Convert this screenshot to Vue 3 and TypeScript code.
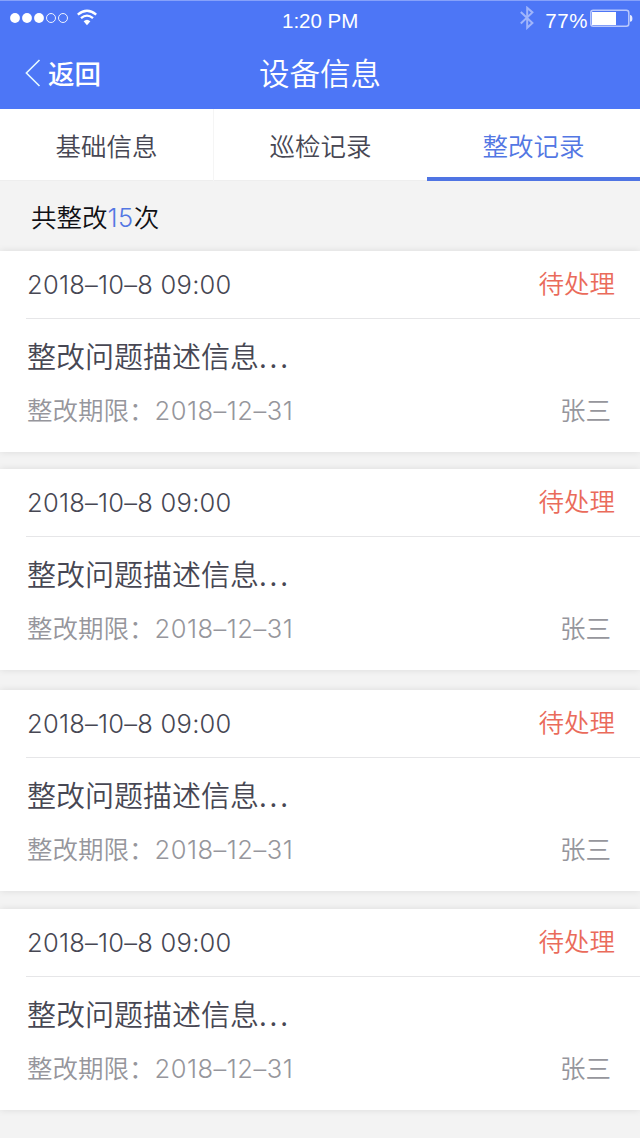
<script setup lang="ts">
interface RectifyRecord {
  id: number
  time: string
  status: string
  description: string
  deadline: string
  person: string
}

const tabs: string[] = ['基础信息', '巡检记录', '整改记录']
const activeTab = 2
const total = 15

const records: RectifyRecord[] = [1, 2, 3, 4].map((id) => ({
  id,
  time: '2018–10–8 09:00',
  status: '待处理',
  description: '整改问题描述信息',
  deadline: '2018–12–31',
  person: '张三',
}))
</script>

<template>
  <div class="screen">
    <header class="header">
      <div class="statusbar">
        <svg class="signal" width="90" height="24" viewBox="0 0 90 24">
          <g fill="#fff">
            <circle cx="15" cy="18" r="4.9" />
            <circle cx="27" cy="18" r="4.9" />
            <circle cx="39" cy="18" r="4.9" />
          </g>
          <g fill="none" stroke="#fff" stroke-width="0.9">
            <circle cx="51" cy="18" r="4.5" />
            <circle cx="63" cy="18" r="4.5" />
          </g>
        </svg>
        <svg class="wifi" width="20" height="17" viewBox="0 0 20 17">
          <g fill="none" stroke="#fff" stroke-width="2.3">
            <path d="M0.8 5.6 Q10 -2.2 19.2 5.6" />
            <path d="M4 9.2 Q10 4 16 9.2" />
          </g>
          <path d="M6.6 12.3 Q10 9.3 13.4 12.3 L10 16.2 Z" fill="#fff" />
        </svg>
        <span class="clock">1:20 PM</span>
        <div class="power">
          <svg width="14" height="24" viewBox="0 0 14 24">
            <path d="M0.8 6 L12.4 17 L7.2 21.8 V1.8 L12.4 6.4 L0.8 17.4" fill="none" stroke="#a0b5fb" stroke-width="2" />
          </svg>
          <span class="percent">77%</span>
          <svg class="battery" width="43" height="20" viewBox="0 0 43 20">
            <rect x="0.8" y="1.3" width="38" height="16" rx="2.5" fill="none" stroke="#b9c8fc" stroke-width="1.5" />
            <rect x="2" y="3" width="24" height="13" fill="#fff" />
            <path d="M40 6 Q42.4 6.3 42.4 9.4 Q42.4 12.5 40 12.8 Z" fill="#e4eaff" />
          </svg>
        </div>
      </div>
      <div class="navbar">
        <div class="back">
          <svg width="16" height="28" viewBox="0 0 16 28">
            <path d="M14.5 1 L1.4 14 L14.5 27" fill="none" stroke="#e6faff" stroke-width="1.6" />
          </svg>
          <span>返回</span>
        </div>
        <h1 class="title">设备信息</h1>
        <div></div>
      </div>
    </header>

    <nav class="tabs">
      <div v-for="(tab, i) in tabs" :key="tab" class="tab" :class="{ active: i === activeTab }">{{ tab }}</div>
    </nav>

    <div class="summary">共整改<span class="num">{{ total }}</span>次</div>

    <main class="list">
      <article v-for="r in records" :key="r.id" class="card">
        <div class="card-head">
          <span class="time">{{ r.time }}</span>
          <span class="state">{{ r.status }}</span>
        </div>
        <div class="desc">{{ r.description }}<span class="dots">...</span></div>
        <div class="foot">
          <span>整改期限：<span class="date">{{ r.deadline }}</span></span>
          <span class="person">{{ r.person }}</span>
        </div>
      </article>
    </main>
  </div>
</template>

<style>
body {
  background: #f3f3f3;
}
</style>

<style scoped>
.screen {
  width: 640px;
  height: 1138px;
  overflow: hidden;
  background: #f3f3f3;
  font-family: "Noto Sans CJK SC", sans-serif;
  font-weight: 350;
  color: #474753;
  white-space: nowrap;
}
svg {
  display: block;
  flex: none;
}
.header {
  height: 109px;
  box-sizing: border-box;
  border-top: 1px solid #86a1fa;
  background: #4d76f6;
  color: #fff;
}
.statusbar {
  display: grid;
  grid-template-columns: 77px 205px 1fr auto;
  height: 38px;
  font: 400 20px/38px "Liberation Sans", sans-serif;
}
.signal {
  margin-top: -1px;
  width: 90px;
}
.wifi {
  margin-top: 8px;
}
.clock {
  padding-top: 1px;
  font-size: 20.5px;
}
.power {
  display: flex;
  padding-right: 7px;
}
.power > svg:first-child {
  margin: 5px 11px 0 0;
}
.percent {
  padding-top: 1px;
  font-size: 20.5px;
  letter-spacing: 0.6px;
  margin-right: 2px;
}
.battery {
  margin-top: 8px;
}
.navbar {
  display: grid;
  grid-template-columns: 1fr auto 1fr;
  height: 70px;
  line-height: 67px;
}
.back {
  display: flex;
  align-items: center;
  gap: 7px;
  padding: 0 0 3px 25px;
  font-size: 26.5px;
  font-weight: 500;
}
.title {
  margin: 0;
  font-size: 30.5px;
  font-weight: 350;
}
.tabs {
  display: grid;
  grid-template-columns: 214px 213px 213px;
  height: 72px;
  box-sizing: border-box;
  background: linear-gradient(#fff 71px, #eee 71px);
}
.tab {
  height: 72px;
  box-sizing: border-box;
  text-align: center;
  font-size: 25.5px;
  line-height: 72px;
}
.tab:first-child {
  border-right: 1px solid #f5f5f5;
}
.tab.active {
  color: #5377e3;
  border-bottom: 4px solid #4f74e3;
}
.summary {
  height: 70px;
  padding-left: 31px;
  line-height: 69px;
  font-size: 25.5px;
  color: #101014;
}
.num {
  font-family: Inter, sans-serif;
  font-size: 25.5px;
  letter-spacing: 0.5px;
  color: #5377e3;
}
.card {
  height: 201px;
  margin-bottom: 18px;
  background: #fff;
  box-shadow: 0 0 7px rgba(0, 0, 0, 0.1);
}
.card:nth-child(1) {
  margin-bottom: 17px;
}
.card:nth-child(2) {
  margin-bottom: 20px;
}
.card-head {
  display: flex;
  justify-content: space-between;
  height: 68px;
  box-sizing: border-box;
  margin-left: 26px;
  padding: 0 25px 0 1px;
  border-bottom: 1px solid #e6e6e8;
  line-height: 67px;
}
.time {
  font-family: Inter, sans-serif;
  font-size: 25.5px;
  letter-spacing: 0.25px;
}
.state {
  font-size: 25.5px;
  line-height: 62px;
  color: #ea6b5b;
}
.desc {
  height: 66px;
  padding: 3px 0 0 27px;
  box-sizing: border-box;
  font-size: 29px;
  line-height: 66px;
}
.dots {
  letter-spacing: 2.8px;
}
.foot {
  display: flex;
  justify-content: space-between;
  padding: 0 29px 0 27px;
  font-size: 25.5px;
  line-height: 48px;
  color: #96969c;
}
.date {
  font-family: Inter, sans-serif;
  letter-spacing: 0.5px;
}
</style>
